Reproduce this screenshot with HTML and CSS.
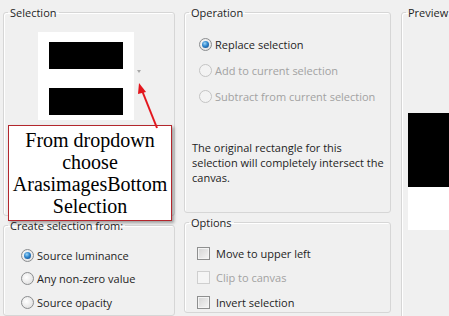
FILE: index.html
```html
<!DOCTYPE html>
<html lang="en">
<head>
    <meta charset="UTF-8">
    <title>Load Selection From Disk</title>
    <link rel="stylesheet" href="styles.css">
</head>
<body>
<div class="dialog">
    <div class="column column-left">
        <fieldset class="group group-selection">
            <legend>Selection</legend>
            <div class="thumb-row">
                <div class="thumb">
                    <div class="thumb-block"></div>
                    <div class="thumb-block"></div>
                </div>
                <span class="drop-arrow"></span>
            </div>
        </fieldset>
        <fieldset class="group group-source">
            <legend>Create selection from:</legend>
            <div class="choice-list">
                <label class="choice"><span class="radio checked"></span>Source luminance</label>
                <label class="choice"><span class="radio"></span>Any non-zero value</label>
                <label class="choice"><span class="radio"></span>Source opacity</label>
            </div>
        </fieldset>
    </div>

    <div class="column column-middle">
        <fieldset class="group group-operation">
            <legend>Operation</legend>
            <div class="choice-list wide">
                <label class="choice"><span class="radio checked"></span>Replace selection</label>
                <label class="choice disabled"><span class="radio"></span>Add to current selection</label>
                <label class="choice disabled"><span class="radio"></span>Subtract from current selection</label>
            </div>
            <p class="note">The original rectangle for this selection will completely intersect the canvas.</p>
        </fieldset>
        <fieldset class="group group-options">
            <legend>Options</legend>
            <div class="check-list">
                <label class="choice"><span class="checkbox"></span>Move to upper left</label>
                <label class="choice disabled"><span class="checkbox"></span>Clip to canvas</label>
                <label class="choice"><span class="checkbox"></span>Invert selection</label>
            </div>
        </fieldset>
    </div>

    <div class="column column-right">
        <fieldset class="group group-preview">
            <legend>Preview</legend>
            <div class="preview">
                <div class="preview-black"></div>
                <div class="preview-white"></div>
            </div>
        </fieldset>
    </div>
</div>

<!-- tutorial callout -->
<div class="callout">From dropdown choose ArasimagesBottom Selection</div>
<svg class="pointer" width="40" height="60" viewBox="0 0 40 60">
    <line x1="27" y1="50" x2="11" y2="10" stroke="#e3161d" stroke-width="2"/>
    <polygon points="9,5 16,14 8,16" fill="#e3161d"/>
</svg>
</body>
</html>
```

FILE: styles.css
```css
body {
    margin: 0;
    width: 449px;
    height: 316px;
    overflow: hidden;
    background-color: #f0f0f0;
    font-family: 'Open Sans', sans-serif;
    font-size: 11px;
    line-height: 15px;
    color: #1e1e1e;
    position: relative;
}
.dialog {
    display: flex;
    gap: 9px;
    padding: 5px 0 0 3px;
}
.column {
    display: flex;
    flex-direction: column;
    flex-shrink: 0;
    gap: 2px;
}
.column-left {
    width: 172px;
}
.column-middle {
    width: 207px;
}
.column-right {
    width: 100px;
    margin-left: 1px;
}
.group {
    margin: 0;
    padding: 0;
    min-width: 0;
    border: 1px solid #d6d6d6;
    border-radius: 3px;
    box-shadow: inset 1px 1px 0 #ffffff;
}
.group legend {
    margin-left: 4px;
    padding: 0 2px;
}
.group-selection {
    height: 209px;
}
.group-source {
    height: 96px;
}
.group-operation {
    height: 206px;
}
.group-options {
    height: 96px;
}
.group-preview {
    height: 320px;
}

/* Selection thumbnail */
.thumb-row {
    display: flex;
    align-items: center;
    margin: 12px 0 0 34px;
}
.thumb {
    width: 74px;
    padding: 10px 11px 5px;
    background-color: #ffffff;
    display: flex;
    flex-direction: column;
    gap: 19px;
}
.thumb-block {
    height: 27px;
    background-color: #000000;
}
.drop-arrow {
    width: 0;
    height: 0;
    margin: 0 0 10px 3px;
    border-left: 2.5px solid transparent;
    border-right: 2.5px solid transparent;
    border-top: 3px solid #a8a8a8;
}

/* Radio and check lists */
.choice-list {
    display: flex;
    flex-direction: column;
    gap: 7.5px;
    padding: 14px 0 0 17px;
}
.choice-list.wide {
    gap: 10px;
    padding: 16px 0 0 14px;
}
.check-list {
    display: flex;
    flex-direction: column;
    gap: 8.5px;
    padding: 15px 0 0 12px;
}
.choice {
    display: flex;
    align-items: center;
    height: 16px;
    gap: 3px;
    white-space: nowrap;
}
.choice.disabled {
    color: #a2a2a2;
}
.radio {
    box-sizing: border-box;
    width: 13px;
    height: 13px;
    border-radius: 50%;
    border: 1px solid #8b8d8f;
    background: radial-gradient(circle at 40% 40%, #ffffff 0%, #e4e4e4 70%, #d2d2d2 100%);
    display: flex;
    align-items: center;
    justify-content: center;
}
.radio.checked::after {
    content: '';
    width: 7px;
    height: 7px;
    border-radius: 50%;
    background: radial-gradient(circle at 40% 35%, #9fd6f6 0%, #2f86cd 45%, #0f3f7c 100%);
}
.disabled .radio {
    border-color: #c4c4c4;
    background: #f3f3f3;
}
.checkbox {
    box-sizing: border-box;
    width: 13px;
    height: 13px;
    margin-right: 3px;
    border: 1px solid #8e8f8f;
    background: linear-gradient(135deg, #d3d3d3 0%, #f6f6f6 100%);
    box-shadow: inset 0 0 0 1px #f4f4f4;
}
.disabled .checkbox {
    border-color: #cfcfcf;
    background: #f5f5f5;
    box-shadow: none;
}
.note {
    margin: 36px 0 0 7px;
    width: 196px;
}

/* Preview */
.preview {
    margin: 93px 0 0 6px;
}
.preview-black {
    height: 74px;
    background-color: #000000;
}
.preview-white {
    height: 43px;
    background-color: #ffffff;
}

/* Tutorial overlay */
.callout {
    position: absolute;
    left: 8px;
    top: 125px;
    width: 162px;
    height: 88px;
    padding: 3px 0;
    border: 1px solid #b3272d;
    background-color: #ffffff;
    box-shadow: 2px 2px 3px rgba(0, 0, 0, 0.35);
    font-family: 'Liberation Serif', serif;
    font-size: 20px;
    line-height: 22px;
    color: #000000;
    text-align: center;
}
.pointer {
    position: absolute;
    left: 130px;
    top: 78px;
}
```
